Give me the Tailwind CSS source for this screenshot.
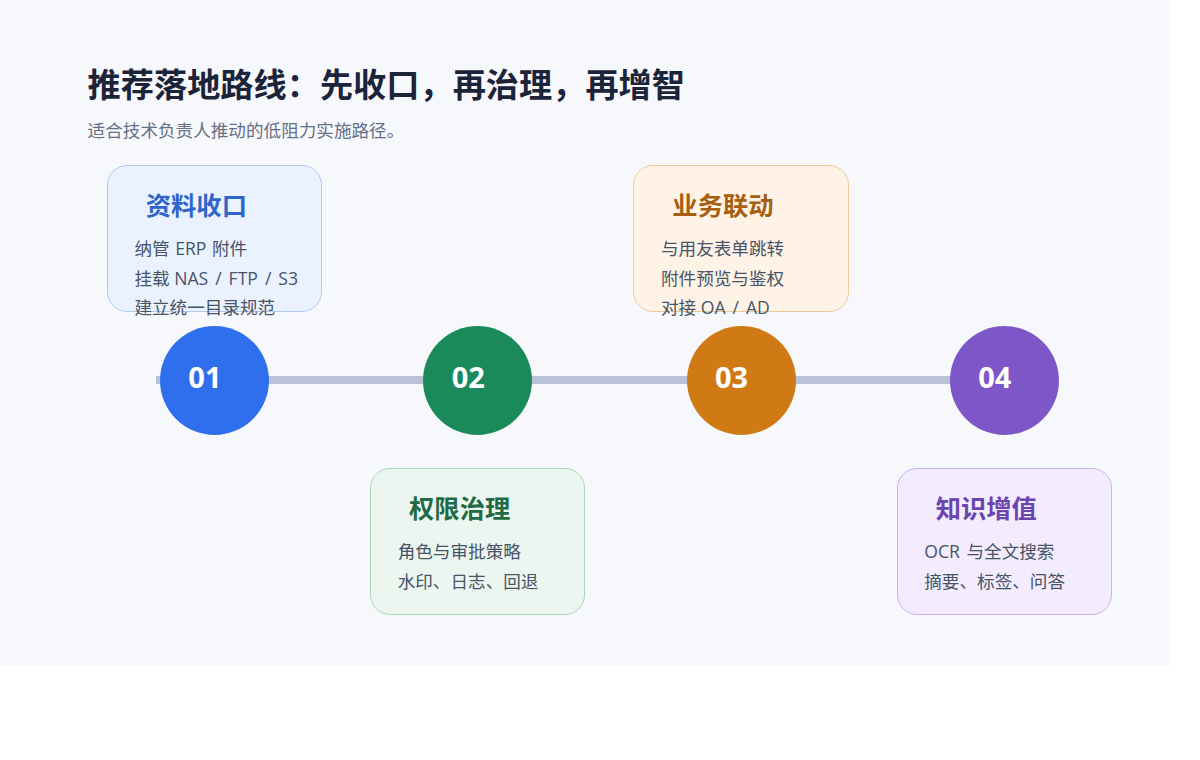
<!DOCTYPE html>
<html lang="zh-CN">

<head>
    <meta charset="UTF-8" />
    <meta name="viewport" content="width=device-width, initial-scale=1.0" />
    <title>推荐落地路线</title>
    <script src="https://cdn.jsdelivr.net/npm/@tailwindcss/browser@4"></script>
</head>

<body class="bg-white font-['Open_Sans','Noto_Sans_CJK_SC',sans-serif]">
    <div class="w-[1170px] h-[665px] bg-[#f7f8fc] pl-[87.6px] pt-[64px]">
        <h1 class="text-[33.2px] leading-[42px] font-bold text-[#1b2438]">推荐落地路线：先收口，再治理，再增智</h1>
        <p class="mt-[12px] text-[17.6px] leading-[24px] text-[#667085]">适合技术负责人推动的低阻力实施路径。</p>

        <div class="relative mt-[23px] ml-[19.2px] w-[1005px] grid grid-cols-[215.3px_215.3px_215.3px_215.3px] gap-x-[48px]">
            <!-- timeline -->
            <div class="absolute left-[49px] top-[211px] w-[800px] h-[8px] bg-[#b9c2d6]"></div>

            <!-- step 1 -->
            <div class="relative flex flex-col items-center">
                <div class="w-full h-[147px] rounded-[20px] border border-[#b0c8f0] bg-[#ebf2ff] pt-[21px] pl-[26.6px]">
                    <h2 class="pl-[11.4px] text-[25.3px] leading-[36px] font-bold text-[#2f65c8]">资料收口</h2>
                    <ul class="mt-[11px] text-[17.6px] leading-[29.5px] text-[#475467] whitespace-nowrap">
                        <li class="[word-spacing:1px]">纳管 ERP 附件</li>
                        <li>挂载 <span class="[word-spacing:2.4px]">NAS / FTP / S3</span></li>
                        <li>建立统一目录规范</li>
                    </ul>
                </div>
                <div class="mt-[14px] w-[109px] h-[109px] rounded-full bg-[#2f6fed] flex items-center justify-center pr-[19px] pb-[8px] text-[29px] font-bold text-white">01</div>
                <div class="mt-[33px] h-[147px]"></div>
            </div>

            <!-- step 2 -->
            <div class="relative flex flex-col items-center">
                <div class="h-[147px]"></div>
                <div class="mt-[14px] w-[109px] h-[109px] rounded-full bg-[#1a8a5a] flex items-center justify-center pr-[19px] pb-[8px] text-[29px] font-bold text-white">02</div>
                <div class="mt-[33px] w-full h-[147px] rounded-[20px] border border-[#a9d8b8] bg-[#ecf6f0] pt-[21px] pl-[26.6px]">
                    <h2 class="pl-[11.4px] text-[25.3px] leading-[36px] font-bold text-[#1f6b45]">权限治理</h2>
                    <ul class="mt-[11px] text-[17.6px] leading-[29.5px] text-[#475467] whitespace-nowrap">
                        <li>角色与审批策略</li>
                        <li>水印、日志、回退</li>
                    </ul>
                </div>
            </div>

            <!-- step 3 -->
            <div class="relative flex flex-col items-center">
                <div class="w-full h-[147px] rounded-[20px] border border-[#f0c99a] bg-[#fff3e7] pt-[21px] pl-[26.6px]">
                    <h2 class="pl-[11.4px] text-[25.3px] leading-[36px] font-bold text-[#a65f10]">业务联动</h2>
                    <ul class="mt-[11px] text-[17.6px] leading-[29.5px] text-[#475467] whitespace-nowrap">
                        <li>与用友表单跳转</li>
                        <li>附件预览与鉴权</li>
                        <li>对接 <span class="[word-spacing:2.4px]">OA / AD</span></li>
                    </ul>
                </div>
                <div class="mt-[14px] w-[109px] h-[109px] rounded-full bg-[#d07a16] flex items-center justify-center pr-[19px] pb-[8px] text-[29px] font-bold text-white">03</div>
                <div class="mt-[33px] h-[147px]"></div>
            </div>

            <!-- step 4 -->
            <div class="relative flex flex-col items-center">
                <div class="h-[147px]"></div>
                <div class="mt-[14px] w-[109px] h-[109px] rounded-full bg-[#7d57c8] flex items-center justify-center pr-[19px] pb-[8px] text-[29px] font-bold text-white">04</div>
                <div class="mt-[33px] w-full h-[147px] rounded-[20px] border border-[#c8b4ec] bg-[#f3ebfe] pt-[21px] pl-[26.6px]">
                    <h2 class="pl-[11.4px] text-[25.3px] leading-[36px] font-bold text-[#6a45b0]">知识增值</h2>
                    <ul class="mt-[11px] text-[17.6px] leading-[29.5px] text-[#475467] whitespace-nowrap">
                        <li class="[word-spacing:2px]">OCR 与全文搜索</li>
                        <li>摘要、标签、问答</li>
                    </ul>
                </div>
            </div>
        </div>
    </div>
</body>

</html>
